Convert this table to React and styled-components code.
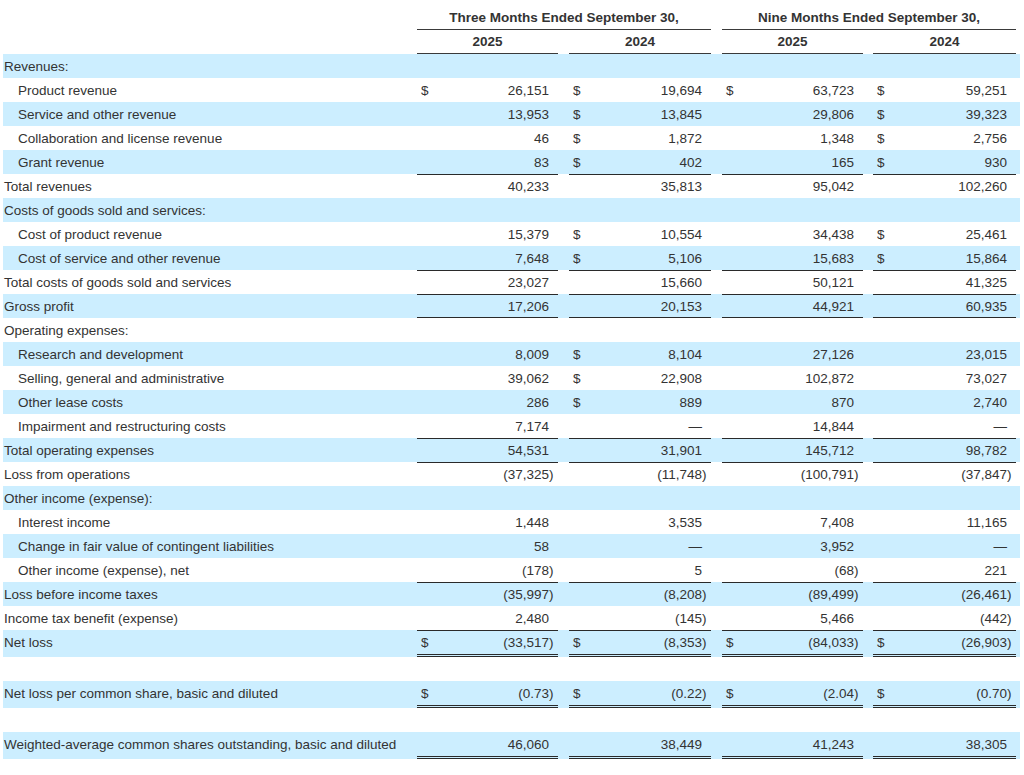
import React from "react";
import styled, { createGlobalStyle } from "styled-components";

const GlobalStyle = createGlobalStyle`
  html, body { margin: 0; padding: 0; background: #ffffff; }
  body {
    font-family: "Liberation Sans", Arial, Helvetica, sans-serif;
    font-size: 13.5px;
    color: #333333;
  }
`;

const COLS = "414px 141px 11px 142px 11px 141px 10px 143px 4px";

const Statement = styled.div`
  padding: 6px 0 0 3px;
  width: 1017px;
`;

const HeadRow = styled.div`
  display: grid;
  grid-template-columns: ${COLS};
  height: 24px;
`;

const HeadCell = styled.div`
  grid-column: ${(p) => p.$col};
  box-sizing: border-box;
  display: flex;
  align-items: center;
  justify-content: center;
  font-weight: bold;
  border-bottom: 1px solid #3a3a3a;
`;

const Row = styled.div`
  display: grid;
  grid-template-columns: ${COLS};
  height: ${(p) => (p.$double ? 27 : 24)}px;
  background: ${(p) => (p.$shaded ? "#cceeff" : "transparent")};
`;

const Label = styled.div`
  display: flex;
  align-items: center;
  padding-left: ${(p) => (p.$indent ? 15 : 1)}px;
  padding-bottom: ${(p) => (p.$double ? 3 : 0)}px;
  white-space: nowrap;
`;

const Cell = styled.div`
  grid-column: ${(p) => p.$col};
  box-sizing: border-box;
  display: flex;
  align-items: center;
  padding-left: 4px;
  border-top: ${(p) => (p.$top ? "1px solid #2a2a2a" : "none")};
  border-bottom: ${(p) =>
    p.$double ? "3px double #2a2a2a" : p.$bottom ? "1px solid #2a2a2a" : "none"};
`;

const Dollar = styled.span`
  width: 12px;
`;

const Num = styled.span`
  flex: 1;
  text-align: right;
`;

const Paren = styled.span`
  width: 9px;
  text-align: left;
`;

const D = "$";
const rows = [
  { label: "Revenues:" },
  { label: "Product revenue", indent: true, v: ["26,151", "19,694", "63,723", "59,251"], d: [1, 1, 1, 1] },
  { label: "Service and other revenue", indent: true, v: ["13,953", "13,845", "29,806", "39,323"], d: [0, 1, 0, 1] },
  { label: "Collaboration and license revenue", indent: true, v: ["46", "1,872", "1,348", "2,756"], d: [0, 1, 0, 1] },
  { label: "Grant revenue", indent: true, v: ["83", "402", "165", "930"], d: [0, 1, 0, 1] },
  { label: "Total revenues", v: ["40,233", "35,813", "95,042", "102,260"], top: true },
  { label: "Costs of goods sold and services:" },
  { label: "Cost of product revenue", indent: true, v: ["15,379", "10,554", "34,438", "25,461"], d: [0, 1, 0, 1] },
  { label: "Cost of service and other revenue", indent: true, v: ["7,648", "5,106", "15,683", "15,864"], d: [0, 1, 0, 1] },
  { label: "Total costs of goods sold and services", v: ["23,027", "15,660", "50,121", "41,325"], top: true },
  { label: "Gross profit", v: ["17,206", "20,153", "44,921", "60,935"], top: true, bottom: true },
  { label: "Operating expenses:" },
  { label: "Research and development", indent: true, v: ["8,009", "8,104", "27,126", "23,015"], d: [0, 1, 0, 0] },
  { label: "Selling, general and administrative", indent: true, v: ["39,062", "22,908", "102,872", "73,027"], d: [0, 1, 0, 0] },
  { label: "Other lease costs", indent: true, v: ["286", "889", "870", "2,740"], d: [0, 1, 0, 0] },
  { label: "Impairment and restructuring costs", indent: true, v: ["7,174", "—", "14,844", "—"] },
  { label: "Total operating expenses", v: ["54,531", "31,901", "145,712", "98,782"], top: true },
  { label: "Loss from operations", v: ["(37,325)", "(11,748)", "(100,791)", "(37,847)"], top: true },
  { label: "Other income (expense):" },
  { label: "Interest income", indent: true, v: ["1,448", "3,535", "7,408", "11,165"] },
  { label: "Change in fair value of contingent liabilities", indent: true, v: ["58", "—", "3,952", "—"] },
  { label: "Other income (expense), net", indent: true, v: ["(178)", "5", "(68)", "221"] },
  { label: "Loss before income taxes", v: ["(35,997)", "(8,208)", "(89,499)", "(26,461)"], top: true },
  { label: "Income tax benefit (expense)", v: ["2,480", "(145)", "5,466", "(442)"] },
  { label: "Net loss", v: ["(33,517)", "(8,353)", "(84,033)", "(26,903)"], d: [1, 1, 1, 1], top: true, double: true },
  { spacer: true },
  { label: "Net loss per common share, basic and diluted", v: ["(0.73)", "(0.22)", "(2.04)", "(0.70)"], d: [1, 1, 1, 1], double: true },
  { spacer: true },
  { label: "Weighted-average common shares outstanding, basic and diluted", v: ["46,060", "38,449", "41,243", "38,305"], double: true },
];

const GROUP_COLS = [2, 4, 6, 8];

function Value({ col, value, dollar, top, bottom, double }) {
  const neg = value.startsWith("(");
  const body = neg ? value.slice(0, -1) : value;
  return (
    <Cell $col={col} $top={top} $bottom={bottom} $double={double}>
      <Dollar>{dollar ? D : ""}</Dollar>
      <Num>{body}</Num>
      <Paren>{neg ? ")" : ""}</Paren>
    </Cell>
  );
}

export default function App() {
  let shadeIndex = 0;
  return (
    <>
      <GlobalStyle />
      <Statement>
        <HeadRow>
          <HeadCell $col="2 / 5">Three Months Ended September 30,</HeadCell>
          <HeadCell $col="6 / 9">Nine Months Ended September 30,</HeadCell>
        </HeadRow>
        <HeadRow>
          <HeadCell $col="2">2025</HeadCell>
          <HeadCell $col="4">2024</HeadCell>
          <HeadCell $col="6">2025</HeadCell>
          <HeadCell $col="8">2024</HeadCell>
        </HeadRow>
        {rows.map((r, i) => {
          const shaded = shadeIndex % 2 === 0;
          shadeIndex += 1;
          if (r.spacer) return <Row key={i} $shaded={shaded} />;
          return (
            <Row key={i} $shaded={shaded} $double={r.double}>
              <Label $indent={r.indent} $double={r.double}>{r.label}</Label>
              {r.v &&
                r.v.map((val, g) => (
                  <Value
                    key={g}
                    col={GROUP_COLS[g]}
                    value={val}
                    dollar={r.d && r.d[g]}
                    top={r.top}
                    bottom={r.bottom}
                    double={r.double}
                  />
                ))}
            </Row>
          );
        })}
      </Statement>
    </>
  );
}
